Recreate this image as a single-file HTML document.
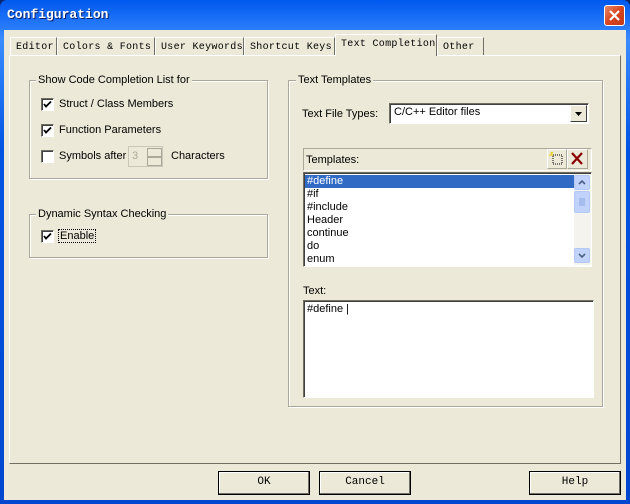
<!DOCTYPE html>
<html><head><style>
*{box-sizing:border-box;margin:0;padding:0}
body{width:630px;height:504px;overflow:hidden;background:#0a246a;font-family:"Liberation Sans",sans-serif;font-size:11px;color:#000}
.win{position:absolute;left:0;top:0;width:630px;height:504px;background:linear-gradient(#0058ee,#3a8cff 8%,#0054e3 30%,#0047d0 100%);border-radius:7px 7px 0 0}
.body{position:absolute;left:4px;top:30px;width:622px;height:470px;background:#ece9d8}
.title{position:absolute;left:7px;top:7px;color:#fff;font:bold 13px "Liberation Mono",monospace;text-shadow:1px 1px #0a1e6a}
.close{position:absolute;left:604px;top:5px;width:21px;height:21px;background:linear-gradient(135deg,#e88a6a,#d8451f 50%,#c0381a);border:1px solid #fff;border-radius:3px}
.a{position:absolute}
.tab{position:absolute;top:37px;height:18px;border:1px solid #fff;border-right-color:#716f64;border-bottom:none;font:10px "Liberation Mono",monospace;letter-spacing:0.3px;padding:4px 0 0 5px;background:#ece9d8;white-space:nowrap}
.panel{position:absolute;left:9px;top:55px;width:612px;height:409px;border:1px solid #fff;border-right-color:#716f64;border-bottom-color:#716f64}
.grp{position:absolute;border:1px solid #aca899;box-shadow:1px 1px 0 #fff inset,1px 1px 0 #fff}
.gl{position:absolute;background:#ece9d8;padding:0 2px}
.cb{position:absolute;width:13px;height:13px;border:1px solid #1c5180;background:#fff;border-color:#716f64 #fff #fff #716f64;box-shadow:inset 1px 1px #404040}
.cb svg{position:absolute;left:1px;top:1px}
.btn{position:absolute;top:471px;height:24px;width:92px;border:1px solid #000;background:#ece9d8;box-shadow:inset -1px -1px #716f64,inset 1px 1px #fff;font:11px "Liberation Mono",monospace;text-align:center;line-height:21px}
.sunk{position:absolute;border:1px solid;border-color:#716f64 #fff #fff #716f64;box-shadow:inset 1px 1px #404040;background:#fff}
</style></head><body>
<div class="win"></div>
<div class="body"></div>
<div class="title">Configuration</div>
<div class="close"><svg width="19" height="19"><path d="M5 5L14 14M14 5L5 14" stroke="#fff" stroke-width="2.2"/></svg></div>

<div class="panel"></div>
<div class="tab" style="left:10px;width:47px">Editor</div>
<div class="tab" style="left:57px;width:98px">Colors &amp; Fonts</div>
<div class="tab" style="left:155px;width:89px">User Keywords</div>
<div class="tab" style="left:244px;width:91px">Shortcut Keys</div>
<div class="tab" style="left:437px;width:47px">Other</div>
<div class="tab" style="left:335px;top:34px;height:22px;width:102px;padding-top:4px">Text Completion</div>

<div class="grp" style="left:29px;top:80px;width:239px;height:99px"></div>
<div class="gl" style="left:36px;top:74px">Show Code Completion List for</div>
<div class="cb" style="left:41px;top:98px"><svg width="9" height="9"><path d="M1 4l2 2.5L8 1.5" stroke="#000" stroke-width="1.8" fill="none"/></svg></div>
<div class="a" style="left:59px;top:98px">Struct / Class Members</div>
<div class="cb" style="left:41px;top:124px"><svg width="9" height="9"><path d="M1 4l2 2.5L8 1.5" stroke="#000" stroke-width="1.8" fill="none"/></svg></div>
<div class="a" style="left:59px;top:124px">Function Parameters</div>
<div class="cb" style="left:41px;top:150px"></div>
<div class="a" style="left:59px;top:150px">Symbols after</div>
<div class="a" style="left:128px;top:146px;width:35px;height:21px;border:1px solid #c9c7ba;background:#ece9d8;color:#aca899;padding:3px 3px">3</div>
<div class="a" style="left:147px;top:148px;width:15px;height:9px;border:1px solid #aca899"></div>
<div class="a" style="left:147px;top:157px;width:15px;height:9px;border:1px solid #aca899"></div>
<div class="a" style="left:171px;top:150px">Characters</div>

<div class="grp" style="left:29px;top:214px;width:239px;height:44px"></div>
<div class="gl" style="left:36px;top:208px">Dynamic Syntax Checking</div>
<div class="cb" style="left:41px;top:230px"><svg width="9" height="9"><path d="M1 4l2 2.5L8 1.5" stroke="#000" stroke-width="1.8" fill="none"/></svg></div>
<div class="a" style="left:58px;top:229px;border:1px dotted #000;padding:0 1px">Enable</div>

<div class="grp" style="left:288px;top:80px;width:315px;height:327px"></div>
<div class="gl" style="left:296px;top:74px">Text Templates</div>
<div class="a" style="left:302px;top:108px">Text File Types:</div>
<div class="sunk" style="left:389px;top:103px;width:200px;height:21px;padding:2px 4px">C/C++ Editor files</div>
<div class="a" style="left:570px;top:105px;width:17px;height:17px;background:#ece9d8;border:1px solid;border-color:#fff #404040 #404040 #fff"><svg width="15" height="15"><path d="M4 6h7l-3.5 4z" fill="#000"/></svg></div>

<div class="a" style="left:303px;top:148px;width:289px;height:23px;border:1px solid;border-color:#aca899 #fff #fff #aca899;padding:5px 2px">Templates:</div>
<div class="a" style="left:547px;top:149px;width:20px;height:20px;border:1px solid;border-color:#fff #aca899 #aca899 #fff"><svg width="18" height="18"><rect x="5" y="5" width="9" height="9" fill="none" stroke="#000" stroke-dasharray="1 1"/><path d="M3 2l1 3M1 5h4M5 2l-2 2" stroke="#e8d020" stroke-width="1.2"/></svg></div>
<div class="a" style="left:567px;top:149px;width:21px;height:20px;border:1px solid;border-color:#fff #aca899 #aca899 #fff"><svg width="19" height="18"><path d="M4 3L14 14M14 3L4 14" stroke="#8b0000" stroke-width="2.2"/></svg></div>

<div class="sunk" style="left:303px;top:172px;width:289px;height:95px;overflow:hidden">
<div style="position:absolute;left:1px;top:2px;width:269px;height:13px;background:#316ac5"></div>
<div style="position:absolute;left:3px;top:2px;line-height:13px;color:#000">
<div style="color:#fff">#define</div><div>#if</div><div>#include</div><div>Header</div><div>continue</div><div>do</div><div>enum</div></div>
<div style="position:absolute;left:270px;top:1px;width:17px;height:91px;background:#f4f3ee"></div>
<div style="position:absolute;left:270px;top:2px;width:16px;height:15px;background:#c1d3fb;border:1px solid #b4c8f6;border-radius:2px"><svg width="14" height="13"><path d="M4 8l3-3 3 3" stroke="#4d6185" stroke-width="1.6" fill="none"/></svg></div>
<div style="position:absolute;left:270px;top:18px;width:16px;height:22px;background:#c1d3fb;border:1px solid #b4c8f6;border-radius:2px"><svg width="14" height="20"><path d="M4 7h6M4 9h6M4 11h6M4 13h6" stroke="#8aa3e0"/></svg></div>
<div style="position:absolute;left:270px;top:75px;width:16px;height:15px;background:#c1d3fb;border:1px solid #b4c8f6;border-radius:2px"><svg width="14" height="13"><path d="M4 5l3 3 3-3" stroke="#4d6185" stroke-width="1.6" fill="none"/></svg></div>
</div>

<div class="a" style="left:303px;top:285px">Text:</div>
<div class="sunk" style="left:303px;top:300px;width:291px;height:98px;padding:2px 3px">#define |</div>

<div class="btn" style="left:218px">OK</div>
<div class="btn" style="left:319px">Cancel</div>
<div class="btn" style="left:529px">Help</div>
</body></html>
